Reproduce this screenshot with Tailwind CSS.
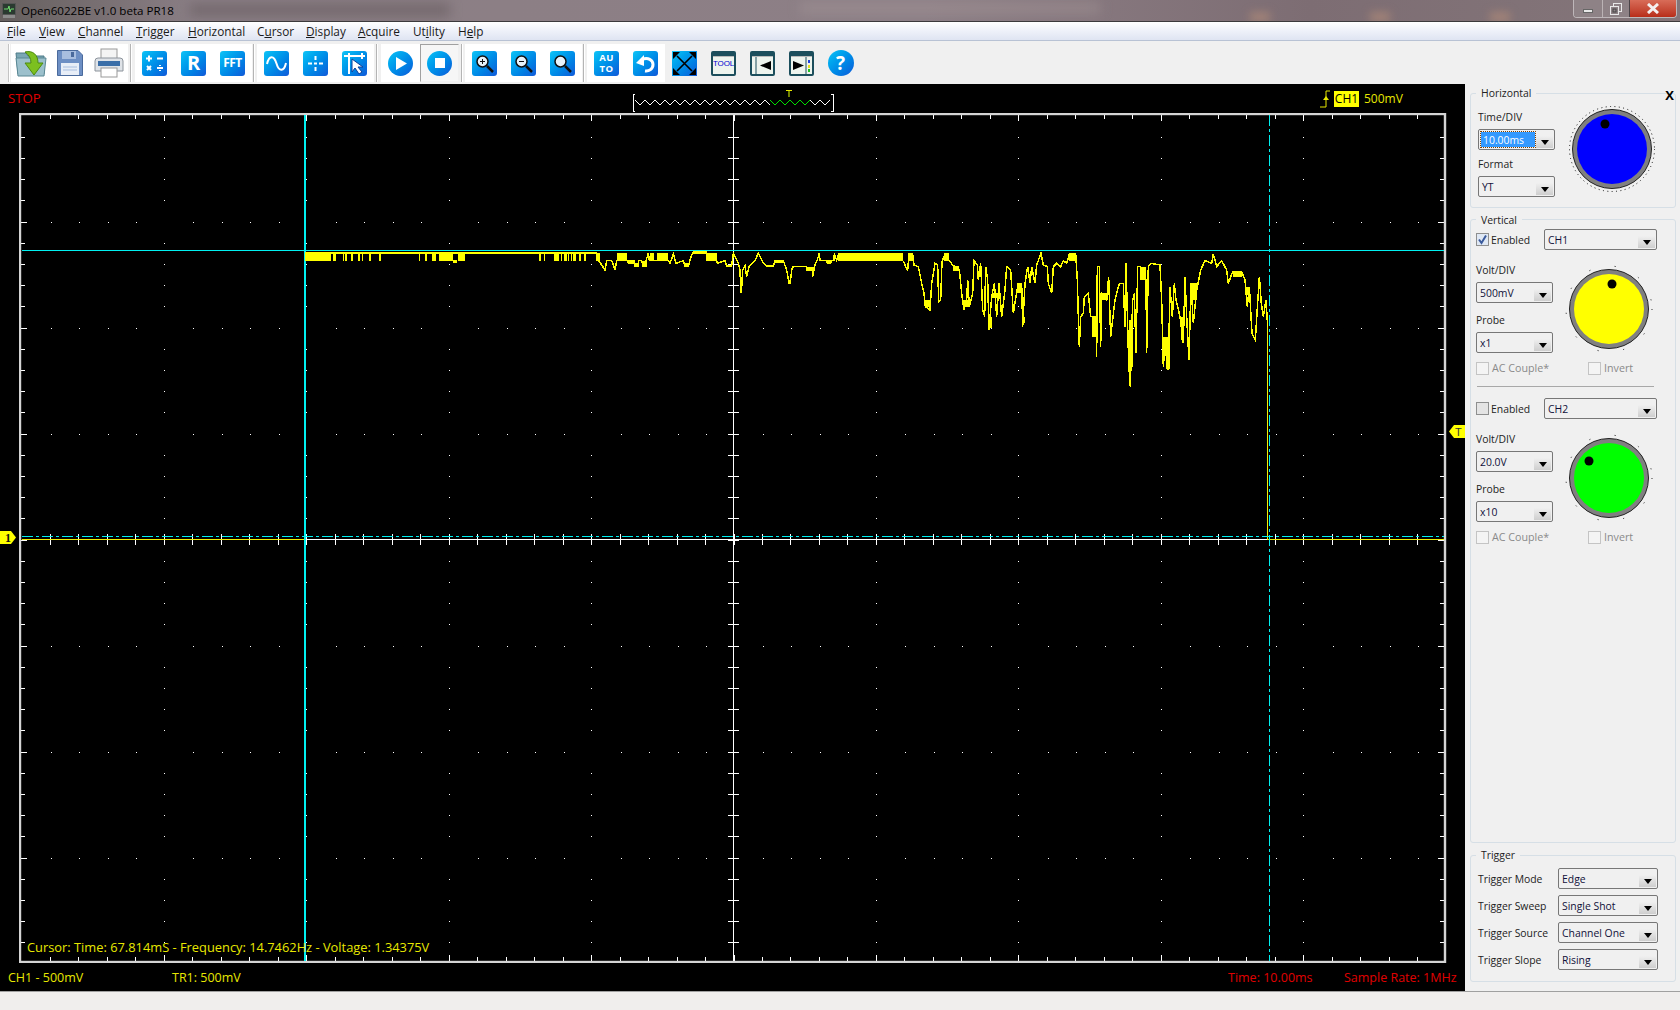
<!DOCTYPE html>
<html lang="en">
<head>
    <meta charset="UTF-8">
    <title>Open6022BE v1.0 beta PR18</title>
    <script src="https://cdn.jsdelivr.net/npm/@tailwindcss/browser@4"></script>
</head>
<body class="bg-black">
<div class="w-[1680px] h-[1010px] flex flex-col overflow-hidden font-['Open_Sans',sans-serif] text-[12px] leading-none text-[#111]">

    <!-- title bar -->
    <div class="relative h-[22px] shrink-0 flex items-start border-b border-[#3c3a3c] bg-[linear-gradient(90deg,#66605f_0%,#8b7f86_12%,#8c7f85_30%,#8d7f86_55%,#7d6d73_78%,#84767a_100%)] overflow-hidden">
        <div class="absolute left-[190px] top-[3px] w-[260px] h-[14px] bg-[#5f5558]/50 blur-[6px]"></div>
        <div class="absolute left-[800px] top-[2px] w-[300px] h-[12px] bg-[#a89a9a]/40 blur-[6px]"></div>
        <div class="absolute left-[1250px] top-[12px] w-[20px] h-[10px] bg-[#b08a78]/70 blur-[4px]"></div>
        <div class="absolute left-[1370px] top-[12px] w-[20px] h-[10px] bg-[#b08a78]/70 blur-[4px]"></div>
        <div class="absolute left-[1490px] top-[12px] w-[20px] h-[10px] bg-[#b08a78]/70 blur-[4px]"></div>
        <svg class="relative ml-[2px] mt-[3px]" width="14" height="15" viewBox="0 0 14 15">
            <rect x="0.5" y="0.5" width="13" height="11" fill="#2a3a30" stroke="#555"/>
            <path d="M2 6H6L7 3L8 9L9 6H12" fill="none" stroke="#6fdc6f"/>
            <rect x="1" y="12" width="12" height="3" fill="#8c8c8c"/>
        </svg>
        <span class="relative ml-[5px] mt-[5px] text-[11.6px] text-black">Open6022BE v1.0 beta PR18</span>
        <div class="relative ml-auto mr-[3px] flex h-[18px] rounded-b-[4px] border border-t-0 border-[#d8d4d6]/70 overflow-hidden">
            <div class="w-[29px] flex items-center justify-center border-r border-[#d8d4d6]/60 bg-[#8e8286]">
                <div class="w-[10px] h-[4px] mt-[4px] bg-[#e8e8e8] border border-[#666]"></div>
            </div>
            <div class="w-[27px] flex items-center justify-center border-r border-[#4a4448] bg-[#8e8286]">
                <svg width="12" height="12" viewBox="0 0 12 12"><rect x="3.5" y="0.5" width="8" height="8" fill="none" stroke="#e8e8e8"/><rect x="0.5" y="3.5" width="8" height="8" fill="#8e8286" stroke="#e8e8e8"/><rect x="3" y="6" width="3" height="3" fill="none" stroke="#444"/></svg>
            </div>
            <div class="w-[46px] flex items-center justify-center bg-linear-to-b from-[#d86c58] to-[#b82c18]">
                <svg width="14" height="11" viewBox="0 0 14 11"><path d="M2 1L12 10M12 1L2 10" stroke="#f4f0f0" stroke-width="3"/></svg>
            </div>
        </div>
    </div>

    <!-- menu bar -->
    <div class="h-[19px] shrink-0 flex items-center pl-[7px] pt-[1px] border-b border-[#b8c2d4] bg-linear-to-b from-[#ffffff] via-[#eef1f9] to-[#dfe4f2] text-[11.8px] text-[#1a1a1a]">
        <span class="w-[32px]"><u>F</u>ile</span>
        <span class="w-[39px]"><u>V</u>iew</span>
        <span class="w-[58px]"><u>C</u>hannel</span>
        <span class="w-[52px]"><u>T</u>rigger</span>
        <span class="w-[69px]"><u>H</u>orizontal</span>
        <span class="w-[49px]">C<u>u</u>rsor</span>
        <span class="w-[52px]"><u>D</u>isplay</span>
        <span class="w-[55px]"><u>A</u>cquire</span>
        <span class="w-[45px]">Ut<u>i</u>lity</span>
        <span>H<u>e</u>lp</span>
    </div>

    <!-- toolbar -->
    <div class="h-[43px] shrink-0 flex items-center pt-[1px] bg-[#f0f0f0]">
        <div class="ml-[8px] w-[2px] h-[38px] bg-[#c4c4c4] border-r border-white"></div>

        <div class="ml-[1px] h-[38px] flex bg-white">
            <div class="w-[39px] flex items-center justify-center">
                <svg width="32" height="32" viewBox="0 0 32 32">
                    <path d="M1 6H11L13 9H29V27H3Z" fill="#7aa6b4" stroke="#4d7a88"/>
                    <path d="M1 11H31L29 29H3Z" fill="#9cc0cc" stroke="#5a8894"/>
                    <path d="M10 5C18 3 23 8 23 16H28L19 28L10 16H16C16 11 14 8 10 5Z" fill="#7cc020" stroke="#4c8a10"/>
                </svg>
            </div>
            <div class="w-[39px] flex items-center justify-center">
                <svg width="26" height="26" viewBox="0 0 26 26">
                    <path d="M0.5 0.5H21L25.5 5V25.5H0.5Z" fill="#6d8fc4" stroke="#4a6a9c"/>
                    <rect x="5" y="1" width="14" height="8" fill="#a8bedf"/>
                    <rect x="14" y="2" width="3" height="5" fill="#4a6a9c"/>
                    <rect x="4" y="13" width="18" height="12" fill="#e8eef7"/>
                    <path d="M6 17H20M6 20H20" stroke="#a8bedf"/>
                </svg>
            </div>
            <div class="w-[39px] flex items-center justify-center">
                <svg width="30" height="30" viewBox="0 0 30 30">
                    <rect x="7" y="1" width="16" height="11" fill="#f4f4f4" stroke="#999"/>
                    <path d="M1 13Q1 10 4 10H26Q29 10 29 13V23H1Z" fill="#dfe3e8" stroke="#8d949c"/>
                    <rect x="4" y="13" width="22" height="5" fill="#3a6ea8"/>
                    <rect x="7" y="20" width="16" height="9" fill="#fff" stroke="#999"/>
                </svg>
            </div>
        </div>
        <div class="ml-[2px] w-[2px] h-[38px] bg-[#b4b4b4] border-r border-white"></div>

        <div class="ml-[3px] h-[38px] flex bg-white">
            <div class="w-[39px] flex items-center justify-center">
                <div class="w-[25px] h-[25px] rounded-[3px] bg-linear-to-br from-[#12c4f6] to-[#1258d8] flex items-center justify-center">
                    <svg width="21" height="21" viewBox="0 0 21 21"><path d="M2 5.5H8M5 2.5V8.5M13 5.5H19M3 13L7 17M7 13L3 17M13 15H19" stroke="#fff" stroke-width="2" fill="none"/><path d="M16 12V13M16 17V18" stroke="#fff" stroke-width="2"/></svg>
                </div>
            </div>
            <div class="w-[39px] flex items-center justify-center">
                <div class="w-[25px] h-[25px] rounded-[3px] bg-linear-to-br from-[#12c4f6] to-[#1258d8] flex items-center justify-center text-white font-bold text-[20px]">R</div>
            </div>
            <div class="w-[39px] flex items-center justify-center">
                <div class="w-[25px] h-[25px] rounded-[3px] bg-linear-to-br from-[#12c4f6] to-[#1258d8] flex items-center justify-center text-white font-bold text-[12px] tracking-[-0.5px]">FFT</div>
            </div>
        </div>
        <div class="ml-[1px] w-[2px] h-[38px] bg-[#b4b4b4] border-r border-white"></div>

        <div class="ml-[2px] h-[38px] flex bg-white">
            <div class="w-[39px] flex items-center justify-center">
                <div class="w-[25px] h-[25px] rounded-[3px] bg-linear-to-br from-[#12c4f6] to-[#1258d8] flex items-center justify-center">
                    <svg width="23" height="23" viewBox="0 0 23 23"><path d="M2 12C4 3 9 3 11.5 11.5C14 20 19 20 21 11" fill="none" stroke="#fff" stroke-width="2"/></svg>
                </div>
            </div>
            <div class="w-[39px] flex items-center justify-center">
                <div class="w-[25px] h-[25px] rounded-[3px] bg-linear-to-br from-[#12c4f6] to-[#1258d8] flex items-center justify-center">
                    <svg width="21" height="21" viewBox="0 0 21 21"><path d="M3 10.5H7M9 10.5H12M14 10.5H18M10.5 3V7M10.5 14V18" stroke="#fff" stroke-width="2"/></svg>
                </div>
            </div>
            <div class="w-[39px] flex items-center justify-center">
                <div class="w-[25px] h-[25px] rounded-[3px] bg-linear-to-br from-[#12c4f6] to-[#1258d8] flex items-center justify-center">
                    <svg width="25" height="25" viewBox="0 0 25 25"><path d="M2 5H23M7 2V23M20 2V8" stroke="#fff" stroke-width="2" fill="none"/><path d="M10 8V21L13 17L17 23L20 21L16 16H21Z" fill="#fff" stroke="#0b3f9a"/></svg>
                </div>
            </div>
        </div>
        <div class="ml-[2px] w-[2px] h-[38px] bg-[#b4b4b4] border-r border-white"></div>

        <div class="ml-[3px] h-[38px] flex bg-white">
            <div class="w-[39px] flex items-center justify-center">
                <div class="w-[25px] h-[25px] rounded-full bg-linear-to-br from-[#12c4f6] to-[#1258d8] flex items-center justify-center">
                    <svg width="15" height="15" viewBox="0 0 15 15"><path d="M3 1L14 7.5L3 14Z" fill="#fff"/></svg>
                </div>
            </div>
            <div class="w-[39px] flex items-center justify-center border border-[#a0a0a0] border-b-[#f0f0f0] border-r-[#f0f0f0] bg-[#f6f6f6]">
                <div class="w-[25px] h-[25px] rounded-full bg-linear-to-br from-[#12c4f6] to-[#1258d8] flex items-center justify-center">
                    <div class="w-[10px] h-[10px] bg-white"></div>
                </div>
            </div>
        </div>
        <div class="ml-[2px] w-[2px] h-[38px] bg-[#b4b4b4] border-r border-white"></div>

        <div class="ml-[2px] h-[38px] flex bg-white">
            <div class="w-[39px] flex items-center justify-center">
                <div class="w-[25px] h-[25px] rounded-[3px] bg-linear-to-br from-[#12c4f6] to-[#1258d8] flex items-center justify-center">
                    <svg width="21" height="21" viewBox="0 0 21 21"><circle cx="8.5" cy="8.5" r="5.5" fill="#e8f4fc" stroke="#111" stroke-width="1.5"/><path d="M13 13L19 19" stroke="#111" stroke-width="2.5"/><path d="M6 8.5H11M8.5 6V11" stroke="#111"/></svg>
                </div>
            </div>
            <div class="w-[39px] flex items-center justify-center">
                <div class="w-[25px] h-[25px] rounded-[3px] bg-linear-to-br from-[#12c4f6] to-[#1258d8] flex items-center justify-center">
                    <svg width="21" height="21" viewBox="0 0 21 21"><circle cx="8.5" cy="8.5" r="5.5" fill="#e8f4fc" stroke="#111" stroke-width="1.5"/><path d="M13 13L19 19" stroke="#111" stroke-width="2.5"/><path d="M6 8.5H11" stroke="#111"/></svg>
                </div>
            </div>
            <div class="w-[39px] flex items-center justify-center">
                <div class="w-[25px] h-[25px] rounded-[3px] bg-linear-to-br from-[#12c4f6] to-[#1258d8] flex items-center justify-center">
                    <svg width="21" height="21" viewBox="0 0 21 21"><circle cx="8.5" cy="8.5" r="5.5" fill="#e8f4fc" stroke="#111" stroke-width="1.5"/><path d="M13 13L19 19" stroke="#111" stroke-width="2.5"/></svg>
                </div>
            </div>
        </div>
        <div class="ml-[1px] w-[2px] h-[38px] bg-[#b4b4b4] border-r border-white"></div>

        <div class="ml-[2px] h-[38px] flex bg-white">
            <div class="w-[39px] flex items-center justify-center">
                <div class="w-[25px] h-[25px] rounded-[3px] bg-linear-to-br from-[#12c4f6] to-[#1258d8] flex flex-col items-center justify-center text-white font-bold text-[9.5px] leading-[11px] tracking-[0.5px]"><span>AU</span><span>TO</span></div>
            </div>
            <div class="w-[39px] flex items-center justify-center">
                <div class="w-[25px] h-[25px] rounded-[3px] bg-linear-to-br from-[#12c4f6] to-[#1258d8] flex items-center justify-center">
                    <svg width="21" height="21" viewBox="0 0 21 21"><path d="M7 6.5C13 4 18 7 18 11.5C18 16 14 18.5 10 18" fill="none" stroke="#fff" stroke-width="3"/><path d="M1 10L9 2V13Z" fill="#fff"/></svg>
                </div>
            </div>
        </div>
        <div class="w-[39px] h-[38px] flex items-center justify-center">
            <div class="w-[25px] h-[25px] bg-linear-to-br from-[#12c4f6] to-[#1258d8] flex items-center justify-center">
                <svg width="25" height="25" viewBox="0 0 25 25"><path d="M5 5L20 20M20 5L5 20" stroke="#000" stroke-width="1.6"/><path d="M1 1H8L1 8ZM24 1H17L24 8ZM1 24H8L1 17ZM24 24H17L24 17Z" fill="#000"/></svg>
            </div>
        </div>
        <div class="w-[39px] h-[38px] flex items-center justify-center">
            <div class="w-[25px] h-[25px] rounded-[2px] border-2 border-[#1c4e5c] bg-[#eef4ee]">
                <div class="h-[4px] bg-[#1c4e5c] border-b border-[#bbb]"></div>
                <div class="mt-[3px] text-center font-['Liberation_Sans',sans-serif] text-[#0000d0] text-[8px] tracking-[-0.2px] whitespace-nowrap">TOOL</div>
            </div>
        </div>
        <div class="w-[39px] h-[38px] flex items-center justify-center">
            <div class="w-[25px] h-[25px] rounded-[2px] border-2 border-[#1c4e5c] bg-[#eef4ee]">
                <div class="h-[4px] bg-[#1c4e5c] border-b border-[#bbb]"></div>
                <svg width="21" height="17" viewBox="0 0 21 17"><path d="M4 0V17" stroke="#1c4e5c"/><path d="M19 4V13L8 8.5Z" fill="#000"/></svg>
            </div>
        </div>
        <div class="w-[39px] h-[38px] flex items-center justify-center">
            <div class="w-[25px] h-[25px] rounded-[2px] border-2 border-[#1c4e5c] bg-[#eef4ee]">
                <div class="h-[4px] bg-[#1c4e5c] border-b border-[#bbb]"></div>
                <svg width="21" height="17" viewBox="0 0 21 17"><path d="M15 0V17" stroke="#1c4e5c"/><path d="M2 4V13L13 8.5Z" fill="#000"/><rect x="17" y="3" width="2" height="3" fill="#2040e0"/><rect x="17" y="8" width="2" height="3" fill="#e8e020"/><rect x="17" y="12" width="2" height="3" fill="#20c020"/></svg>
            </div>
        </div>
        <div class="w-[39px] h-[38px] flex items-center justify-center">
            <div class="w-[26px] h-[26px] rounded-full bg-linear-to-br from-[#12c4f6] to-[#1258d8] flex items-center justify-center text-white font-bold text-[19px]">?</div>
        </div>
    </div>

    <div class="flex-1 flex min-h-0">

        <!-- scope -->
        <div class="relative w-[1465px] shrink-0 bg-black flex flex-col">
            <div class="h-[29px] shrink-0 flex items-center pl-[8px]">
                <span class="w-[624px] text-[13.2px] text-[#e00000]">STOP</span>
                <svg id="window" width="202" height="24" viewBox="632 85 202 24" class="mt-[5px]">
                    <path d="M635 90H633V107H635M831 90H833V107H831" fill="none" stroke="#fff" shape-rendering="crispEdges"/>
                    <polyline id="zigW" fill="none" stroke="#fff"/>
                    <polyline id="zigW2" fill="none" stroke="#fff"/>
                    <polyline id="zigG" fill="none" stroke="#00e000"/>
                    <path d="M786 86.5H792" stroke="#e8e800"/>
                    <path d="M789 87V93" stroke="#708000" stroke-width="2"/>
                </svg>
                <div class="flex items-center ml-[486px] text-[12px]">
                    <svg width="11" height="18" viewBox="0 0 11 18"><path d="M0 17H6V1H10" fill="none" stroke="#e8e800"/><path d="M3 10L6 6L9 10Z" fill="#e8e800"/></svg>
                    <span class="ml-[3px] w-[25px] h-[16px] bg-[#ffff00] text-black flex items-center justify-center">CH1</span>
                    <span class="ml-[5px] text-[#e8e800]">500mV</span>
                </div>
            </div>

            <svg id="plot" class="ml-[19px] shrink-0" width="1428" height="850" viewBox="19 113 1428 850">
                <g id="grid" shape-rendering="crispEdges"></g>
                <rect x="20" y="114" width="1425" height="848" fill="none" stroke="#d4d4d4" stroke-width="2.4"/>

                <g fill="none" stroke="#f0f000" shape-rendering="crispEdges">
                    <path d="M22 539.5H304.5V256"/>
                    <path d="M1444 539.5H1267.5V327"/>
                </g>

                <g fill="none" stroke="#00f0f0" shape-rendering="crispEdges">
                    <path d="M22 250.5H1444"/>
                    <path d="M305 115V961" stroke-width="1.6"/>
                    <path d="M1269.5 115V961" stroke-dasharray="11 3 3 3"/>
                    <path d="M22 536.5H1444" stroke-dasharray="11 3 3 3" stroke-width="1.2"/>
                </g>

                <!-- trace, left part: coordinates read off at 3x -->
                <g transform="translate(290 230) scale(0.33333)" fill="#ffff00" shape-rendering="crispEdges">
                    <rect x="46" y="67" width="76" height="25"/>
                    <rect x="128" y="65" width="10" height="27"/>
                    <rect x="120" y="65" width="800" height="7"/>
                    <rect x="426" y="65" width="12" height="27"/>
                    <rect x="447" y="68" width="43" height="24"/>
                    <rect x="490" y="90" width="12" height="10"/>
                    <rect x="503" y="68" width="22" height="24"/>
                    <rect x="792" y="65" width="14" height="27"/>
                    <rect x="822" y="65" width="8" height="27"/>
                    <rect x="850" y="65" width="8" height="27"/>
                    <rect x="918" y="68" width="12" height="24"/>
                    <rect x="980" y="70" width="32" height="22"/>
                    <rect x="1012" y="90" width="22" height="10"/>
                    <rect x="1032" y="98" width="14" height="12"/>
                    <rect x="1055" y="92" width="13" height="18"/>
                    <rect x="1080" y="70" width="12" height="22"/>
                    <rect x="1100" y="70" width="35" height="22"/>
                    <rect x="1182" y="98" width="13" height="12"/>
                    <rect x="1205" y="65" width="45" height="7"/>
                    <rect x="1248" y="70" width="32" height="22"/>
                    <path d="M160 72V92M168 72V92M186 72V92M207 72V92M218 72V92M240 72V92M270 72V92M388 72V92M408 72V92M750 72V92M763 72V92M815 72V92M835 72V92M845 72V92M870 72V92M885 72V92" fill="none" stroke="#ffff00" stroke-width="1.6" vector-effect="non-scaling-stroke"/>
                    <polyline fill="none" stroke="#ffff00" stroke-width="1.5" vector-effect="non-scaling-stroke" points="925,90 935,105 945,120 950,92 965,92 970,105 975,120 980,92 1012,92 1015,100 1035,100 1035,108 1045,108 1045,92 1055,92 1060,108 1068,108 1068,92 1075,70 1078,92 1135,92 1140,100 1150,72 1158,100 1180,92 1185,108 1195,108 1205,75 1210,65 1250,65 1250,92 1280,92 1282,100 1305,92 1310,108 1325,108 1330,70 1345,100 1350,120 1352,170 1354,190 1358,120 1365,108 1370,140 1378,108 1395,92 1405,70 1420,100 1430,108 1450,108 1455,92 1480,92 1490,120 1497,160"/>
                </g>

                <!-- gap between the two crops -->
                <g transform="translate(770 235) scale(0.33333)" fill="#ffff00" shape-rendering="crispEdges">
                    <rect x="12" y="76" width="30" height="8"/>
                    <rect x="54" y="135" width="9" height="12"/>
                    <rect x="108" y="95" width="18" height="12"/>
                    <rect x="170" y="76" width="14" height="10"/>
                    <rect x="205" y="54" width="95" height="23"/>
                    <polyline fill="none" stroke="#ffff00" stroke-width="1.5" vector-effect="non-scaling-stroke" points="60,145 66,100 70,95 108,95 125,105 130,95 128,125 135,88 140,80 148,55 150,76 170,76 172,85 182,85 185,76 192,76 193,55 200,76 205,60"/>
                </g>

                <!-- trace, right part -->
                <g transform="translate(840 230) scale(0.33333)" fill="#ffff00" shape-rendering="crispEdges">
                    <rect x="0" y="70" width="190" height="22"/>
                    <rect x="206" y="70" width="12" height="22"/>
                    <rect x="255" y="210" width="17" height="22"/>
                    <rect x="312" y="70" width="16" height="22"/>
                    <rect x="338" y="108" width="20" height="14"/>
                    <rect x="368" y="210" width="22" height="22"/>
                    <rect x="448" y="260" width="7" height="35"/>
                    <rect x="455" y="190" width="25" height="15"/>
                    <rect x="545" y="260" width="10" height="20"/>
                    <rect x="530" y="160" width="15" height="30"/>
                    <rect x="686" y="70" width="21" height="22"/>
                    <rect x="757" y="260" width="13" height="60"/>
                    <rect x="785" y="190" width="18" height="20"/>
                    <rect x="868" y="270" width="12" height="140"/>
                    <rect x="900" y="110" width="18" height="40"/>
                    <rect x="968" y="320" width="22" height="30"/>
                    <rect x="978" y="350" width="12" height="68"/>
                    <rect x="1022" y="260" width="10" height="70"/>
                    <rect x="1055" y="160" width="15" height="50"/>
                    <rect x="1178" y="122" width="27" height="18"/>
                    <rect x="1218" y="170" width="12" height="25"/>
                    <polyline fill="none" stroke="#ffff00" stroke-width="1.5" vector-effect="non-scaling-stroke" points="190,92 197,110 203,120 207,72 218,72 222,105 235,110 245,160 252,190 256,230 270,240 275,160 285,100 293,105 296,215 302,210 306,95 315,72 328,92 338,105 358,120 365,190 372,240 380,210 383,150 388,230 398,190 402,92 412,105 415,150 422,100 428,240 434,260 437,110 443,150 447,300 455,200 463,160 470,260 477,160 485,260 495,180 500,110 512,120 520,250 528,200 535,160 545,160 548,290 555,160 563,110 570,160 575,110 585,160 590,105 603,70 610,105 622,110 625,160 635,190 640,110 650,100 662,110 670,92 680,100 688,72 707,72 712,150 715,260 718,350 722,260 730,250 733,200 745,190 752,260 768,260 770,380 772,110 778,110 782,350 785,190 800,210 806,140 812,320 825,210 838,160 850,160 855,290 858,100 866,400 871,470 878,210 883,190 888,370 893,110 902,110 918,150 920,370 925,110 932,100 960,105 965,210 970,410 975,350 985,420 990,170 997,260 1003,160 1008,210 1020,260 1030,340 1035,140 1040,260 1047,390 1053,160 1060,280 1070,180 1082,120 1095,92 1115,100 1120,72 1130,110 1145,92 1160,120 1165,160 1178,125 1205,125 1215,150 1222,230 1228,170 1236,310 1246,330 1258,140 1264,220 1270,260 1278,210 1283,290"/>
                </g>
            </svg>

            <div class="flex-1 flex items-center pt-[2px] text-[12.5px] text-[#e8e800] relative">
                <span class="absolute left-[8px]">CH1 - 500mV</span>
                <span class="absolute left-[172px]">TR1: 500mV</span>
                <span class="absolute left-[1228px] text-[#e00000]">Time: 10.00ms</span>
                <span class="absolute left-[1344px] text-[#e00000]">Sample Rate: 1MHz</span>
            </div>

            <!-- things lying over the plot -->
            <span class="absolute left-[27px] top-[857px] text-[12.85px] text-[#e8e800] whitespace-nowrap">Cursor: Time: 67.814mS - Frequency: 14.7462Hz - Voltage: 1.34375V</span>
            <svg class="absolute left-0 top-[447px]" width="17" height="13" viewBox="0 0 17 13">
                <path d="M0 0H11L16 6.5L11 13H0Z" fill="#ffff00"/>
                <text x="5" y="11" font-family="Liberation Serif" font-weight="bold" font-size="12" fill="#111">1</text>
            </svg>
            <svg class="absolute left-[1449px] top-[341px]" width="16" height="13" viewBox="0 0 16 13">
                <path d="M0 6.5L5 0H16V13H5Z" fill="#ffff00"/>
                <text x="6" y="11" font-family="Liberation Sans" font-size="11" fill="#333">T</text>
            </svg>
        </div>

        <!-- control panel -->
        <div class="w-[215px] shrink-0 flex flex-col bg-[#f0f0f0] text-[10.4px] text-[#222] pl-[5px]">

            <div class="relative mt-[9px] w-[206px] h-[115px] shrink-0 border border-[#d6dfe6] rounded-[3px] pl-[7px] pt-[15px] flex items-start">
                <span class="absolute left-[5px] top-[-8px] px-[5px] h-[15px] flex items-center bg-[#f0f0f0]">Horizontal</span>
                <span class="absolute right-[1px] top-[-5px] font-bold text-[13px] text-black">X</span>
                <div class="w-[77px] shrink-0">
                    <div class="h-[16px] flex items-center">Time/DIV</div>
                    <div class="relative mt-[4px] w-[77px] h-[21px] border border-[#777] rounded-[2px] flex items-center pl-[2px]">
                        <span class="w-[54px] h-[15px] flex items-center bg-[#3399ff] text-white pl-[2px] pt-[1px] outline-1 outline-dotted outline-[#804000]">10.00ms</span>
                        <div class="absolute right-[1px] bottom-[1px] w-[17px] h-[12px] bg-linear-to-b from-[#f0f0f0] to-[#cecece] flex items-center justify-center"><div class="w-0 h-0 border-x-[4px] border-x-transparent border-t-[5px] border-t-black"></div></div>
                    </div>
                    <div class="mt-[6px] h-[16px] flex items-center">Format</div>
                    <div class="relative mt-[4px] w-[77px] h-[21px] border border-[#777] rounded-[2px] flex items-center pl-[3px] pt-[1px] text-[#10103a]">YT
                        <div class="absolute right-[1px] bottom-[1px] w-[17px] h-[12px] bg-linear-to-b from-[#f0f0f0] to-[#cecece] flex items-center justify-center"><div class="w-0 h-0 border-x-[4px] border-x-transparent border-t-[5px] border-t-black"></div></div>
                    </div>
                </div>
                <svg class="ml-[12px] mt-[-5px] shrink-0" width="90" height="90" viewBox="-45 -45 90 90">
                    <circle r="42.5" fill="none" stroke="#111" stroke-width="1" stroke-dasharray="1 3.4"/>
                    <circle r="39.5" fill="#808080" stroke="#222"/>
                    <circle r="35" fill="#0000ff"/>
                    <circle cx="-7" cy="-25" r="4.5" fill="#000"/>
                </svg>
            </div>

            <div class="relative mt-[11px] w-[206px] h-[624px] shrink-0 border border-[#d6dfe6] rounded-[3px] pl-[5px] pt-[9px]">
                <span class="absolute left-[5px] top-[-7px] px-[5px] h-[15px] flex items-center bg-[#f0f0f0]">Vertical</span>

                <div class="flex items-center h-[21px]">
                    <div class="w-[13px] h-[13px] border border-[#8e8f8f] bg-[#dfe8f4] flex items-center justify-center">
                        <svg width="11" height="11" viewBox="0 0 11 11"><path d="M2 5.5L4.5 9L9 1.5" fill="none" stroke="#3a5a9c" stroke-width="2"/></svg>
                    </div>
                    <span class="ml-[2px] w-[53px] pt-[1px]">Enabled</span>
                    <div class="relative w-[113px] h-[21px] border border-[#777] rounded-[2px] flex items-center pl-[3px] pt-[1px] text-[#10103a]">CH1
                        <div class="absolute right-[1px] bottom-[1px] w-[17px] h-[12px] bg-linear-to-b from-[#f0f0f0] to-[#cecece] flex items-center justify-center"><div class="w-0 h-0 border-x-[4px] border-x-transparent border-t-[5px] border-t-black"></div></div>
                    </div>
                </div>
                <div class="flex items-start mt-[12px]">
                    <div class="w-[77px] shrink-0">
                        <div class="h-[16px] flex items-center">Volt/DIV</div>
                        <div class="relative mt-[4px] w-[77px] h-[21px] border border-[#777] rounded-[2px] flex items-center pl-[3px] pt-[1px] text-[#10103a]">500mV
                            <div class="absolute right-[1px] bottom-[1px] w-[17px] h-[12px] bg-linear-to-b from-[#f0f0f0] to-[#cecece] flex items-center justify-center"><div class="w-0 h-0 border-x-[4px] border-x-transparent border-t-[5px] border-t-black"></div></div>
                        </div>
                        <div class="mt-[9px] h-[16px] flex items-center">Probe</div>
                        <div class="relative mt-[4px] w-[77px] h-[21px] border border-[#777] rounded-[2px] flex items-center pl-[3px] pt-[1px] text-[#10103a]">x1
                            <div class="absolute right-[1px] bottom-[1px] w-[17px] h-[12px] bg-linear-to-b from-[#f0f0f0] to-[#cecece] flex items-center justify-center"><div class="w-0 h-0 border-x-[4px] border-x-transparent border-t-[5px] border-t-black"></div></div>
                        </div>
                    </div>
                    <svg class="ml-[11px] mt-[2px] shrink-0" width="90" height="90" viewBox="-45 -45 90 90">
                        <circle r="43" fill="none" stroke="#111" stroke-width="1" stroke-dasharray="1 25"/>
                        <circle r="39.5" fill="#808080" stroke="#222"/>
                        <circle r="35" fill="#ffff00"/>
                        <circle cx="3" cy="-25" r="4.5" fill="#000"/>
                    </svg>
                </div>
                <div class="flex items-center mt-[8px] h-[13px] text-[#8a8a8a] text-[10.7px]">
                    <div class="w-[13px] h-[13px] border border-[#c4c4c4] bg-[#f4f4f4]"></div>
                    <span class="ml-[3px] w-[96px]">AC Couple*</span>
                    <div class="w-[13px] h-[13px] border border-[#c4c4c4] bg-[#f4f4f4]"></div>
                    <span class="ml-[3px]">Invert</span>
                </div>

                <div class="mt-[11px] ml-[1px] w-[177px] h-px bg-[#a8a8a8]"></div>

                <div class="flex items-center h-[21px] mt-[11px]">
                    <div class="w-[13px] h-[13px] border border-[#8e8f8f] bg-[#e4e4e4]"></div>
                    <span class="ml-[2px] w-[53px] pt-[1px]">Enabled</span>
                    <div class="relative w-[113px] h-[21px] border border-[#777] rounded-[2px] flex items-center pl-[3px] pt-[1px] text-[#10103a]">CH2
                        <div class="absolute right-[1px] bottom-[1px] w-[17px] h-[12px] bg-linear-to-b from-[#f0f0f0] to-[#cecece] flex items-center justify-center"><div class="w-0 h-0 border-x-[4px] border-x-transparent border-t-[5px] border-t-black"></div></div>
                    </div>
                </div>
                <div class="flex items-start mt-[12px]">
                    <div class="w-[77px] shrink-0">
                        <div class="h-[16px] flex items-center">Volt/DIV</div>
                        <div class="relative mt-[4px] w-[77px] h-[21px] border border-[#777] rounded-[2px] flex items-center pl-[3px] pt-[1px] text-[#10103a]">20.0V
                            <div class="absolute right-[1px] bottom-[1px] w-[17px] h-[12px] bg-linear-to-b from-[#f0f0f0] to-[#cecece] flex items-center justify-center"><div class="w-0 h-0 border-x-[4px] border-x-transparent border-t-[5px] border-t-black"></div></div>
                        </div>
                        <div class="mt-[9px] h-[16px] flex items-center">Probe</div>
                        <div class="relative mt-[4px] w-[77px] h-[21px] border border-[#777] rounded-[2px] flex items-center pl-[3px] pt-[1px] text-[#10103a]">x10
                            <div class="absolute right-[1px] bottom-[1px] w-[17px] h-[12px] bg-linear-to-b from-[#f0f0f0] to-[#cecece] flex items-center justify-center"><div class="w-0 h-0 border-x-[4px] border-x-transparent border-t-[5px] border-t-black"></div></div>
                        </div>
                    </div>
                    <svg class="ml-[11px] mt-[2px] shrink-0" width="90" height="90" viewBox="-45 -45 90 90">
                        <circle r="43" fill="none" stroke="#111" stroke-width="1" stroke-dasharray="1 25"/>
                        <circle r="39.5" fill="#808080" stroke="#222"/>
                        <circle r="35" fill="#00ff00"/>
                        <circle cx="-20" cy="-17" r="4.5" fill="#000"/>
                    </svg>
                </div>
                <div class="flex items-center mt-[8px] h-[13px] text-[#8a8a8a] text-[10.7px]">
                    <div class="w-[13px] h-[13px] border border-[#c4c4c4] bg-[#f4f4f4]"></div>
                    <span class="ml-[3px] w-[96px]">AC Couple*</span>
                    <div class="w-[13px] h-[13px] border border-[#c4c4c4] bg-[#f4f4f4]"></div>
                    <span class="ml-[3px]">Invert</span>
                </div>
            </div>

            <div class="relative mt-auto mb-[9px] w-[206px] h-[127px] shrink-0 border border-[#d6dfe6] rounded-[3px] pl-[7px] pt-[12px] flex flex-col gap-[6px]">
                <span class="absolute left-[5px] top-[-8px] px-[5px] h-[15px] flex items-center bg-[#f0f0f0]">Trigger</span>
                <div class="flex items-center h-[21px]">
                    <span class="w-[80px] pt-[1px]">Trigger Mode</span>
                    <div class="relative w-[100px] h-[21px] border border-[#777] rounded-[2px] flex items-center pl-[3px] pt-[1px] text-[#10103a]">Edge
                        <div class="absolute right-[1px] bottom-[1px] w-[17px] h-[12px] bg-linear-to-b from-[#f0f0f0] to-[#cecece] flex items-center justify-center"><div class="w-0 h-0 border-x-[4px] border-x-transparent border-t-[5px] border-t-black"></div></div>
                    </div>
                </div>
                <div class="flex items-center h-[21px]">
                    <span class="w-[80px] pt-[1px]">Trigger Sweep</span>
                    <div class="relative w-[100px] h-[21px] border border-[#777] rounded-[2px] flex items-center pl-[3px] pt-[1px] text-[#10103a]">Single Shot
                        <div class="absolute right-[1px] bottom-[1px] w-[17px] h-[12px] bg-linear-to-b from-[#f0f0f0] to-[#cecece] flex items-center justify-center"><div class="w-0 h-0 border-x-[4px] border-x-transparent border-t-[5px] border-t-black"></div></div>
                    </div>
                </div>
                <div class="flex items-center h-[21px]">
                    <span class="w-[80px] pt-[1px]">Trigger Source</span>
                    <div class="relative w-[100px] h-[21px] border border-[#777] rounded-[2px] flex items-center pl-[3px] pt-[1px] text-[#10103a]">Channel One
                        <div class="absolute right-[1px] bottom-[1px] w-[17px] h-[12px] bg-linear-to-b from-[#f0f0f0] to-[#cecece] flex items-center justify-center"><div class="w-0 h-0 border-x-[4px] border-x-transparent border-t-[5px] border-t-black"></div></div>
                    </div>
                </div>
                <div class="flex items-center h-[21px]">
                    <span class="w-[80px] pt-[1px]">Trigger Slope</span>
                    <div class="relative w-[100px] h-[21px] border border-[#777] rounded-[2px] flex items-center pl-[3px] pt-[1px] text-[#10103a]">Rising
                        <div class="absolute right-[1px] bottom-[1px] w-[17px] h-[12px] bg-linear-to-b from-[#f0f0f0] to-[#cecece] flex items-center justify-center"><div class="w-0 h-0 border-x-[4px] border-x-transparent border-t-[5px] border-t-black"></div></div>
                    </div>
                </div>
            </div>
        </div>
    </div>

    <!-- status bar -->
    <div class="h-[19px] shrink-0 bg-[#f0eeed] border-t border-[#a0a0a0]"></div>
</div>

<script>
    // graticule: 10 x 8 divisions around the centre (733, 539.5)
    const grid = document.getElementById('grid');
    const cx = 733.5, cy = 539.5, divX = 142.45, divY = 106;
    let d = '', dots = '';
    for (let i = -25; i <= 25; i++) {
        const x = Math.round(cx + i * divX / 5) + 0.5;
        if (i === -25 || i === 25) continue;
        const major = i % 5 === 0;
        const len = major ? 6 : 4;
        d += `M${x} 115V${115 + len}M${x} 961V${961 - len}`;
        d += `M${x} ${cy - 5.5}V${cy + 5.5}`;
        for (let k = -3; k <= 3; k++) {
            if (k !== 0 && !major) dots += `M${x} ${Math.round(cy + k * divY)}h1`;
        }
    }
    for (let j = -20; j <= 20; j++) {
        const y = Math.round(cy + j * divY / 5) + 0.5;
        if (j === -20 || j === 20) continue;
        const major = j % 5 === 0;
        const len = major ? 6 : 4;
        d += `M21 ${y}H${21 + len}M1444 ${y}H${1444 - len}`;
        d += `M${cx - 5.5} ${y}H${cx + 5.5}`;
        for (let k = -4; k <= 4; k++) {
            if (k !== 0 && j % 5 !== 0) dots += `M${Math.round(cx + k * divX)} ${y}h1`;
        }
    }
    // the centre axis shows white only between the two cursors
    grid.innerHTML = `<path d="${d}M733.5 115V961M305 539.5H1267" stroke="#fff" fill="none"/><path d="${dots}" stroke="#fff" fill="none"/>`;

    // trigger window zigzag
    function zig(from, to) {
        const pts = [];
        for (let x = from, up = true; x <= to; x += 5, up = !up) pts.push(`${x},${up ? 96 : 101}`);
        return pts.join(' ');
    }
    document.getElementById('zigW').setAttribute('points', zig(635, 770));
    document.getElementById('zigG').setAttribute('points', zig(770, 810));
    document.getElementById('zigW2').setAttribute('points', zig(810, 830));
</script>
</body>
</html>
